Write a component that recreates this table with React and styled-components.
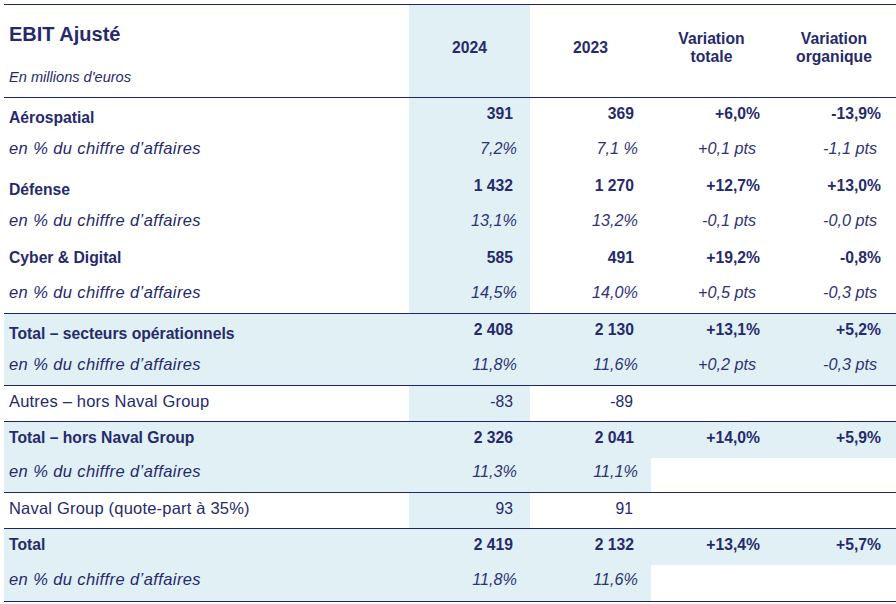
import React from 'react';
import styled, { createGlobalStyle } from 'styled-components';

const NAVY = '#262a6c';
const LINE = '#20246a';
const SHADE = '#e1f0f5';

const GlobalStyle = createGlobalStyle`
  html, body {
    margin: 0;
    padding: 0;
    background: #fff;
  }
  body {
    font-family: "Liberation Sans", Arial, sans-serif;
    color: ${NAVY};
  }
`;

// label, 2024, 2023, variation totale, variation organique
const COLS = '405px 121px 121px 121px 124px';

// right padding of the figures, per column and per kind of row
const PAD = {
  bold: [17, 17, 12, 15],
  regular: [17, 18, 12, 15],
  italic: [13, 13, 16, 19],
};

const Sheet = styled.div`
  width: 892px;
  padding: 4px 0 0 4px;
`;

const Row = styled.div`
  display: grid;
  grid-template-columns: ${COLS};
  box-sizing: border-box;
  height: ${(p) => p.$h || 36}px;
  background: ${(p) => (p.$shade ? SHADE : '#fff')};
  border-bottom: ${(p) => (p.$rule ? `1px solid ${LINE}` : 'none')};
`;

const HeadRow = styled(Row)`
  height: 94px;
  border-top: 1px solid ${LINE};
  border-bottom: 1px solid ${LINE};
`;

const TitleCell = styled.div`
  display: flex;
  flex-direction: column;
  gap: 21px;
  padding: 17px 0 0 5px;
`;

const Title = styled.div`
  font-size: 20px;
  font-weight: 700;
  line-height: 25px;
`;

const Unit = styled.div`
  font-size: 14.6px;
  font-style: italic;
  line-height: 18px;
`;

const HeadCell = styled.div`
  display: flex;
  align-items: center;
  justify-content: center;
  text-align: center;
  padding-bottom: 6px;
  font-size: 15.7px;
  font-weight: 700;
  line-height: 18.5px;
  background: ${(p) => (p.$year ? SHADE : 'transparent')};
`;

const lift = (p) => (p.$kind === 'italic' ? 7 : 4);

const Label = styled.div`
  display: flex;
  align-items: center;
  padding: ${(p) => (p.$drop ? 7 : 0)}px 0 ${lift}px 5px;
  white-space: nowrap;
  font-size: ${(p) => (p.$kind === 'bold' ? 15.7 : 16.5)}px;
  font-weight: ${(p) => (p.$kind === 'bold' ? 700 : 400)};
  font-style: ${(p) => (p.$kind === 'italic' ? 'italic' : 'normal')};
  letter-spacing: ${(p) => (p.$kind === 'italic' ? 0.4 : p.$kind === 'regular' ? 0.2 : 0)}px;
`;

const Num = styled.div`
  display: flex;
  align-items: center;
  justify-content: flex-end;
  padding: 0 ${(p) => PAD[p.$kind][p.$col]}px ${lift}px 0;
  white-space: nowrap;
  font-size: ${(p) => (p.$kind === 'italic' ? 16.2 : 15.7)}px;
  font-weight: ${(p) => (p.$kind === 'bold' ? 700 : 400)};
  font-style: ${(p) => (p.$kind === 'italic' ? 'italic' : 'normal')};
  color: ${(p) => (p.$kind === 'italic' ? '#2f3374' : NAVY)};
  background: ${(p) => (p.$year ? SHADE : p.$blank ? '#fff' : 'transparent')};
`;

const nb = (s) => s.replace(/ /g, '\u00a0');

const rows = [
  { label: 'Aérospatial', kind: 'bold', drop: true, values: ['391', '369', '+6,0%', '-13,9%'] },
  { label: 'en % du chiffre d’affaires', kind: 'italic', values: ['7,2%', '7,1 %', '+0,1 pts', '-1,1 pts'] },
  { label: 'Défense', kind: 'bold', drop: true, values: ['1 432', '1 270', '+12,7%', '+13,0%'] },
  { label: 'en % du chiffre d’affaires', kind: 'italic', values: ['13,1%', '13,2%', '-0,1 pts', '-0,0 pts'] },
  { label: 'Cyber & Digital', kind: 'bold', values: ['585', '491', '+19,2%', '-0,8%'] },
  { label: 'en % du chiffre d’affaires', kind: 'italic', rule: true, values: ['14,5%', '14,0%', '+0,5 pts', '-0,3 pts'] },
  { label: 'Total – secteurs opérationnels', kind: 'bold', shade: true, drop: true, values: ['2 408', '2 130', '+13,1%', '+5,2%'] },
  { label: 'en % du chiffre d’affaires', kind: 'italic', shade: true, rule: true, values: ['11,8%', '11,6%', '+0,2 pts', '-0,3 pts'] },
  { label: 'Autres – hors Naval Group', kind: 'regular', rule: true, values: ['-83', '-89', '', ''] },
  { label: 'Total – hors Naval Group', kind: 'bold', shade: true, values: ['2 326', '2 041', '+14,0%', '+5,9%'] },
  { label: 'en % du chiffre d’affaires', kind: 'italic', shade: true, rule: true, blank: true, h: 35, values: ['11,3%', '11,1%', '', ''] },
  { label: 'Naval Group (quote-part à 35%)', kind: 'regular', rule: true, values: ['93', '91', '', ''] },
  { label: 'Total', kind: 'bold', shade: true, values: ['2 419', '2 132', '+13,4%', '+5,7%'] },
  { label: 'en % du chiffre d’affaires', kind: 'italic', shade: true, rule: true, blank: true, h: 37, values: ['11,8%', '11,6%', '', ''] },
];

export default function App() {
  return (
    <>
      <GlobalStyle />
      <Sheet>
        <HeadRow>
          <TitleCell>
            <Title>EBIT Ajusté</Title>
            <Unit>En millions d'euros</Unit>
          </TitleCell>
          <HeadCell $year>2024</HeadCell>
          <HeadCell>2023</HeadCell>
          <HeadCell>
            Variation
            <br />
            totale
          </HeadCell>
          <HeadCell>
            Variation
            <br />
            organique
          </HeadCell>
        </HeadRow>
        {rows.map((r, i) => (
          <Row key={i} $shade={r.shade} $rule={r.rule} $h={r.h}>
            <Label $kind={r.kind} $drop={r.drop}>
              {r.label}
            </Label>
            {r.values.map((v, c) => (
              <Num key={c} $col={c} $kind={r.kind} $year={c === 0} $blank={r.blank && c > 1}>
                {nb(v)}
              </Num>
            ))}
          </Row>
        ))}
      </Sheet>
    </>
  );
}
